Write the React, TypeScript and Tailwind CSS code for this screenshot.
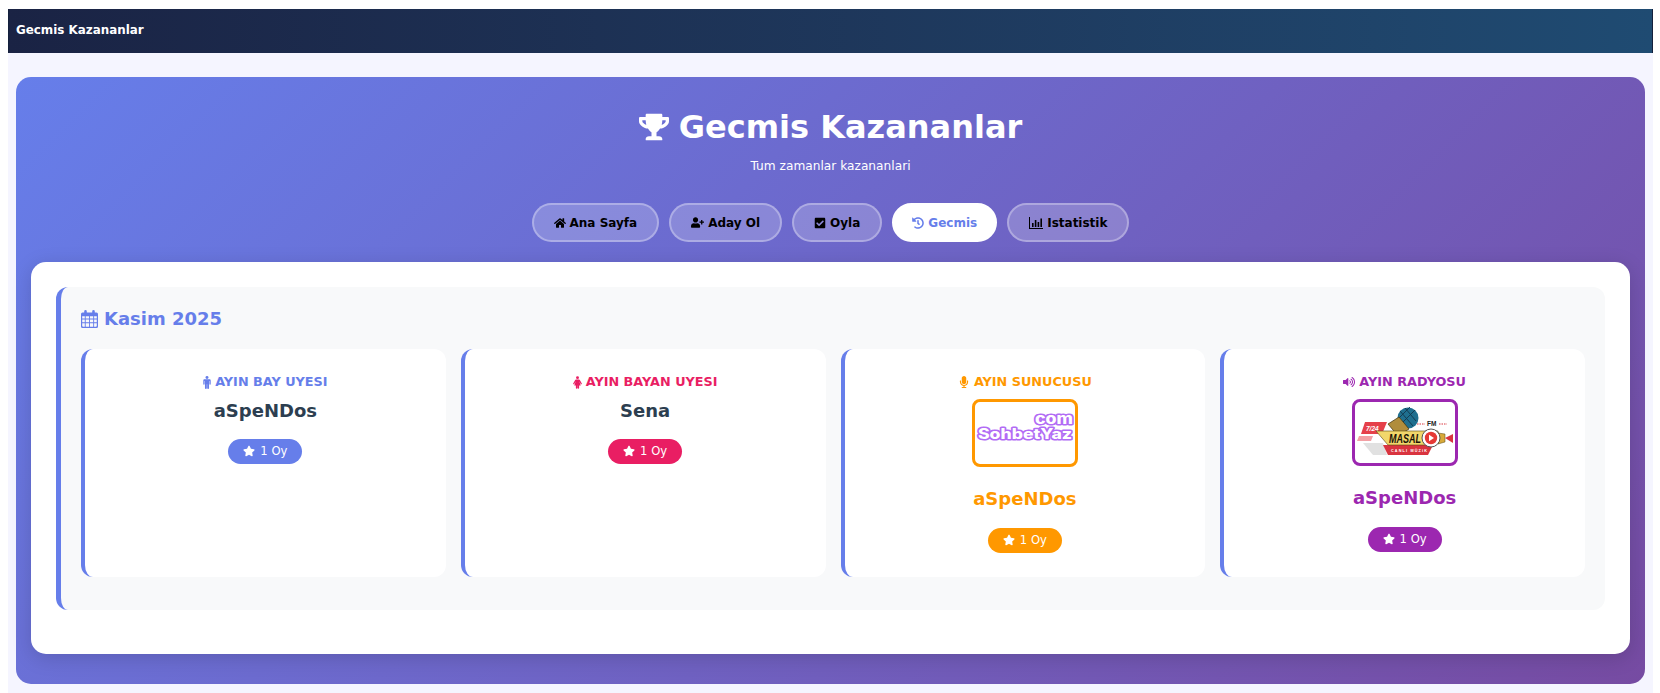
import React from "react";
import { FaTrophy, FaHome, FaUserPlus, FaCheckSquare, FaHistory, FaMicrophone, FaVolumeUp, FaStar } from "react-icons/fa";

function IconBars({ className }: { className?: string }) {
  return (
    <svg viewBox="0 0 14 12" className={className} fill="currentColor">
      <path d="M0 0h1v11h13v1H0z" />
      <path d="M3 6h1.6v4H3zM5.8 3h1.6v7H5.8zM8.6 5h1.6v5H8.6zM11.4 1.5H13V10h-1.6z" />
    </svg>
  );
}

function IconCalendar({ className }: { className?: string }) {
  return (
    <svg viewBox="0 0 17 18" className={className} fill="currentColor">
      <path fillRule="evenodd" d="M1.5 2.5H3.2V1.4a1.3 1.3 0 0 1 2.6 0v1.1h5.4V1.4a1.3 1.3 0 0 1 2.6 0v1.1h1.7A1.5 1.5 0 0 1 17 4v12.5a1.5 1.5 0 0 1-1.5 1.5h-14A1.5 1.5 0 0 1 0 16.5V4a1.5 1.5 0 0 1 1.5-1.5zM1.2 6.2v2.4h2.6V6.2zm3.5 0v2.4h3.3V6.2zm4.2 0v2.4h3.3V6.2zm4.2 0v2.4h2.7V6.2zM1.2 9.5v2.8h2.6V9.5zm3.5 0v2.8h3.3V9.5zm4.2 0v2.8h3.3V9.5zm4.2 0v2.8h2.7V9.5zM1.2 13.2v2.6a1 1 0 0 0 1 1h1.6v-3.6zm3.5 0v3.6h3.3v-3.6zm4.2 0v3.6h3.3v-3.6zm4.2 0v3.6h1.7a1 1 0 0 0 1-1v-2.6z" />
    </svg>
  );
}

function IconMale({ className }: { className?: string }) {
  return (
    <svg viewBox="0 0 8 14" className={className} fill="currentColor">
      <circle cx="4" cy="1.6" r="1.6" />
      <path d="M1.4 3.6h5.2c.8 0 1.4.6 1.4 1.4v3.6a.7.7 0 0 1-1.4 0V5.4h-.4V13a1 1 0 0 1-2 0V9h-.4v4a1 1 0 0 1-2 0V5.4h-.4v3.2a.7.7 0 0 1-1.4 0V5c0-.8.6-1.4 1.4-1.4z" />
    </svg>
  );
}

function IconFemale({ className }: { className?: string }) {
  return (
    <svg viewBox="0 0 10 14" className={className} fill="currentColor">
      <circle cx="5" cy="1.6" r="1.6" />
      <path d="M3.4 3.6h3.2c.5 0 .9.3 1 .7L9.8 8a.65.65 0 0 1-1.2.6L7 5.6l1.6 4.6H6.8V13a.85.85 0 0 1-1.7 0v-2.8h-.2V13a.85.85 0 0 1-1.7 0v-2.8H1.4L3 5.6 1.4 8.6A.65.65 0 0 1 .2 8l2.2-3.7c.1-.4.5-.7 1-.7z" />
    </svg>
  );
}

function SohbetLogo() {
  return (
    <svg viewBox="0 0 100 62" className="w-full h-full">
      <g fontFamily="Inter,'DejaVu Sans',sans-serif" fontWeight="800" fill="#fff" stroke="#b26cf5" strokeWidth="3" strokeLinejoin="round" paintOrder="stroke">
        <text x="98" y="22" fontSize="15" textAnchor="end" textLength="38" lengthAdjust="spacingAndGlyphs">com</text>
        <text x="3" y="37" fontSize="14.5" textLength="94" lengthAdjust="spacingAndGlyphs">SohbetYaz</text>
      </g>
    </svg>
  );
}

function MasalLogo() {
  return (
    <svg viewBox="0 0 100 61" className="w-full h-full">
      <circle cx="53" cy="16" r="10.5" fill="#1f6f8f" />
      <path d="M45 9l13 15M50 6l11 13M60 8L46 22M55 5L44 16" stroke="#12384d" strokeWidth="0.9" fill="none" />
      <path d="M33 22l11-7 10 12-11 7z" fill="#b08d3c" stroke="#3f300c" strokeWidth="0.7" />
      <path d="M10 20h22l-5 12H6z" fill="#e5404a" />
      <path d="M4 34h14l-2 5H2z" fill="#f3a0a4" />
      <path d="M8 41h20l4 12H18z" fill="#c9c9c9" opacity="0.55" />
      <text x="11" y="29" fontFamily="'Liberation Sans',sans-serif" fontSize="6.5" fontWeight="700" fontStyle="italic" fill="#fff">7/24</text>
      <path d="M28 43h50l-5 10H33z" fill="#d9343f" />
      <path d="M21 29h62v9l-14 5H33z" fill="#f2d76b" stroke="#57470f" strokeWidth="0.6" />
      <text x="34" y="41" fontFamily="'Liberation Sans',sans-serif" fontSize="12" fontWeight="700" fontStyle="italic" fill="#1a1206" textLength="32" lengthAdjust="spacingAndGlyphs">MASAL</text>
      <text x="36" y="50" fontFamily="'Liberation Sans',sans-serif" fontSize="3.8" fontWeight="700" fill="#fff" textLength="36">CANLI MÜZİK</text>
      <text x="72" y="24" fontFamily="'Liberation Sans',sans-serif" fontSize="6.5" fontWeight="700" fill="#222">FM</text>
      <path d="M62 22h8M84 22h8" stroke="#d9343f" strokeWidth="1" strokeDasharray="1.5 1" />
      <path d="M83 31l7 1v8l-7 2z" fill="#d8a93a" stroke="#57470f" strokeWidth="0.5" />
      <path d="M90 36l8-4v9z" fill="#d9343f" />
      <circle cx="76" cy="36" r="9" fill="#fff" stroke="#555" strokeWidth="1" />
      <circle cx="76" cy="36" r="6.2" fill="#e53935" />
      <path d="M74 32.8l5 3.2-5 3.2z" fill="#fff" />
    </svg>
  );
}

const navs = [
  { label: "Ana Sayfa", icon: <FaHome className="w-[12px] h-[12px]" /> },
  { label: "Aday Ol", icon: <FaUserPlus className="w-[13px] h-[13px]" /> },
  { label: "Oyla", icon: <FaCheckSquare className="w-[12px] h-[12px]" /> },
  { label: "Gecmis", icon: <FaHistory className="w-[12px] h-[12px]" />, active: true },
  { label: "Istatistik", icon: <IconBars className="w-[14px] h-[12px]" /> },
];

function Badge({ className }: { className: string }) {
  return (
    <div className="flex justify-center">
      <span className={`flex items-center gap-[5px] rounded-[20px] px-[15px] h-[25px] text-[11.6px] text-white ${className}`}>
        <FaStar className="w-[12px] h-[12px] -mt-[1px]" />
        1 Oy
      </span>
    </div>
  );
}

function WinnerCard({ title, icon, color, name, nameColor, logo, badge, border }: any) {
  return (
    <div className="bg-white rounded-[12px] border-l-[4px] border-[#667eea] px-[20px] pt-[23px] pb-[24px] text-center">
      <div className={`flex items-center justify-center gap-[4px] text-[12.8px] font-bold leading-[20px] ${color}`}>
        {icon}
        <span>{title}</span>
      </div>
      {logo ? (
        <>
          <div className={`mx-auto mt-[7px] w-[106px] rounded-[8px] border-[3px] bg-white overflow-hidden ${border}`}>{logo}</div>
          <div className={`mt-[20px] mb-[17px] text-[18px] font-bold leading-[24px] ${nameColor}`}>{name}</div>
        </>
      ) : (
        <div className={`mt-[4px] mb-[13px] text-[18px] font-bold leading-[30px] ${nameColor}`}>{name}</div>
      )}
      <Badge className={badge} />
    </div>
  );
}

export default function App() {
  return (
    <div className="h-[693px] overflow-hidden bg-white font-['DejaVu_Sans','Verdana',sans-serif] pt-[9px] pl-[8px] pr-[7px]">
      <div className="h-full bg-[#f5f5ff]">
        <header className="h-[44px] flex items-center pl-[7px] border-x border-[#14203c] bg-gradient-to-r from-[#1a2344] to-[#1f4b72] text-white text-[11.9px] font-bold">
          Gecmis Kazananlar
        </header>
        <main className="mt-[24px] mx-[8px] rounded-[15px] bg-[linear-gradient(135deg,#667eea_0%,#764ba2_100%)] px-[15px] pt-[30px] pb-[30px]">
          <h1 className="flex items-center justify-center gap-[10px] text-white text-[32px] font-bold leading-[40px]">
            <FaTrophy className="w-[30px] h-[30px]" />
            Gecmis Kazananlar
          </h1>
          <p className="mt-[9px] text-center text-white text-[12.2px] leading-[20px]">Tum zamanlar kazananlari</p>
          <nav className="mt-[27px] flex justify-center gap-[10px]">
            {navs.map(({ label, icon, active }) => (
              <div
                key={label}
                className={
                  active
                    ? "h-[39px] flex items-center gap-[4px] rounded-[25px] px-[18px] bg-white border-2 border-white text-[#667eea] text-[12px] font-bold"
                    : "h-[39px] flex items-center gap-[4px] rounded-[25px] px-[20px] bg-white/20 border-2 border-white/30 text-black text-[12px] font-bold"
                }
              >
                {icon}
                {label}
              </div>
            ))}
          </nav>
          <section className="mt-[20px] bg-white rounded-[15px] px-[25px] pt-[25px] pb-[44px] shadow-[0_4px_20px_rgba(0,0,0,0.15)]">
            <div className="rounded-[12px] bg-[#f8f9fa] border-l-[5px] border-[#667eea] px-[20px] pt-[21px] pb-[33px]">
              <h2 className="flex items-center gap-[6px] text-[#667eea] text-[18px] font-bold leading-[22px]">
                <IconCalendar className="w-[17px] h-[18px]" />
                Kasim 2025
              </h2>
              <div className="mt-[19px] grid grid-cols-4 gap-[15px]">
                <WinnerCard title="AYIN BAY UYESI" icon={<IconMale className="w-[8px] h-[13px]" />} color="text-[#667eea]" name="aSpeNDos" nameColor="text-[#2c3e50]" badge="bg-[#667eea]" />
                <WinnerCard title="AYIN BAYAN UYESI" icon={<IconFemale className="w-[9px] h-[13px]" />} color="text-[#e91e63]" name="Sena" nameColor="text-[#2c3e50]" badge="bg-[#e91e63]" />
                <WinnerCard title="AYIN SUNUCUSU" icon={<FaMicrophone className="w-[12px] h-[12px]" />} color="text-[#ff9800]" name="aSpeNDos" nameColor="text-[#ff9800]" badge="bg-[#ff9800]" border="border-[#ff9800]" logo={<SohbetLogo />} />
                <WinnerCard title="AYIN RADYOSU" icon={<FaVolumeUp className="w-[12px] h-[12px]" />} color="text-[#9c27b0]" name="aSpeNDos" nameColor="text-[#9c27b0]" badge="bg-[#9c27b0]" border="border-[#9c27b0]" logo={<MasalLogo />} />
              </div>
            </div>
          </section>
        </main>
      </div>
    </div>
  );
}
